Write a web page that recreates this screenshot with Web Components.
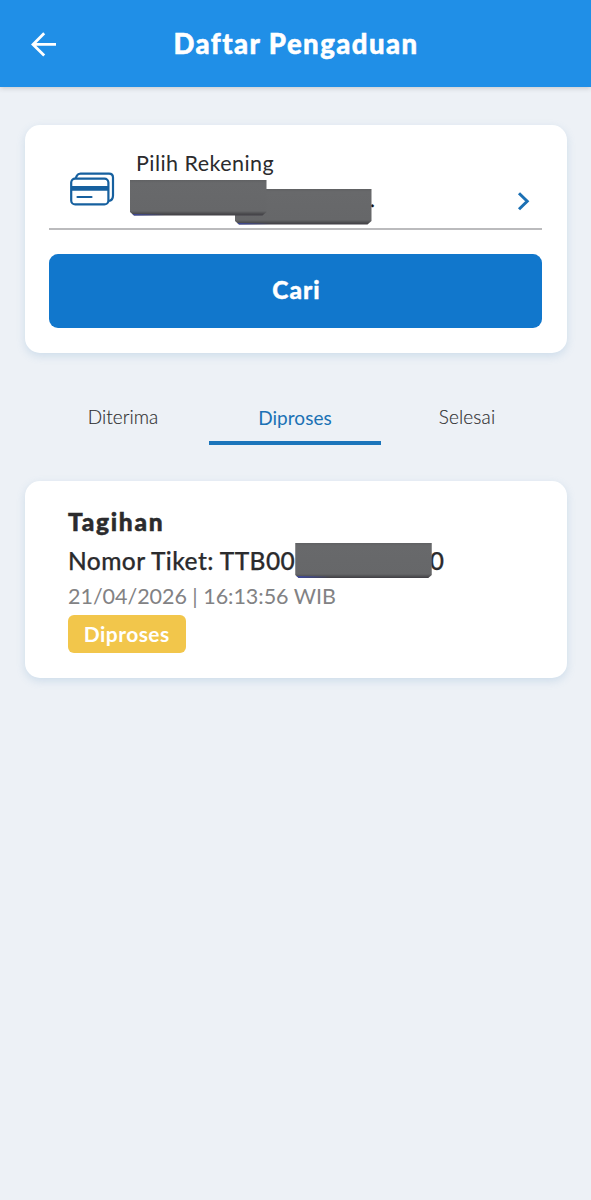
<!DOCTYPE html>
<html lang="id">
<head>
<meta charset="utf-8">
<meta name="viewport" content="width=device-width, initial-scale=1">
<title>Daftar Pengaduan</title>
<style>
  html, body { margin: 0; min-height: 100%; }
  body {
    background: #edf1f6;
    color: #2b2b2d;
    font-family: Lato, "Liberation Sans", sans-serif;
    font-kerning: normal;
  }
</style>
</head>
<body>
<pengaduan-page>
  <app-header slot="header">Daftar Pengaduan</app-header>

  <app-card class="search">
    <account-picker>
      <span slot="label">Pilih Rekening</span>
      <masked-bar slot="value"></masked-bar>
      <masked-bar slot="value" class="second"></masked-bar>
      <span slot="tail">.</span>
    </account-picker>
    <app-button>Cari</app-button>
  </app-card>

  <tab-bar>
    <tab-item style="--track: 0.05px">Diterima</tab-item>
    <tab-item style="--track: 0.05px" active>Diproses</tab-item>
    <tab-item style="--track: 0.15px">Selesai</tab-item>
  </tab-bar>

  <app-card class="ticket">
    <ticket-item>
      <span slot="title">Tagihan</span>
      <span slot="number">Nomor Tiket: TTB00</span>
      <masked-bar slot="number"></masked-bar>
      <span slot="number" class="last">0</span>
      <span slot="date">21/04/2026 | 16:13:56 WIB</span>
      <status-badge slot="status">Diproses</status-badge>
    </ticket-item>
  </app-card>
</pengaduan-page>

<script>
"use strict";

(function () {
  /* registers an element whose shadow root is cloned from the markup */
  function define(name, markup) {
    var template = document.createElement("template");
    template.innerHTML = markup;
    customElements.define(name, class extends HTMLElement {
      constructor() {
        super();
        this.attachShadow({ mode: "open" }).appendChild(template.content.cloneNode(true));
      }
    });
  }

  /* ── Page ──────────────────────────────────────────────────── */
  define("pengaduan-page", `
    <style>
      :host { display: flex; flex-direction: column; min-height: 1200px; }
      main { display: flex; flex-direction: column; padding: 37.5px 24.5px 0; }
      ::slotted(tab-bar) { margin: 37px 13.5px 36.4px 12.5px; }
    </style>
    <slot name="header"></slot>
    <main><slot></slot></main>
  `);

  /* ── Header ────────────────────────────────────────────────── */
  define("app-header", `
    <style>
      :host {
        display: grid;
        grid-template-columns: 86px 1fr 86px;
        align-items: center;
        height: 87px;
        background: #208fe7;
        color: #fff;
        box-shadow: 0 1px 5px rgba(70, 60, 60, 0.24);
      }
      svg { display: block; margin-left: 30px; }
      h1 {
        margin: 0;
        text-align: center;
        font-size: 27.5px;
        line-height: 34px;
        font-weight: 900;
        letter-spacing: 1.45px;
        text-indent: 1px;
        -webkit-text-stroke: 0.5px currentColor;
        white-space: nowrap;
      }
    </style>
    <svg width="27" height="26" viewBox="0 0 27 26" fill="none" stroke="#fff" stroke-width="2.8">
      <path d="M26 13.4H3M14.2 2.2 3 13.4l11.2 11.2"/>
    </svg>
    <h1><slot></slot></h1>
  `);

  /* ── Card ──────────────────────────────────────────────────── */
  define("app-card", `
    <style>
      :host {
        display: block;
        box-sizing: border-box;
        background: #fff;
        border-radius: 15px;
        box-shadow: 0 3px 9px rgba(95, 150, 195, 0.22);
      }
      :host(.search) { height: 228px; padding: 0 24.5px; }
      :host(.ticket) { height: 197px; padding: 0 43.5px; }
    </style>
    <slot></slot>
  `);

  /* ── Redaction bar ─────────────────────────────────────────── */
  define("masked-bar", `
    <style>
      :host {
        display: block;
        flex: none;
        width: 136.5px;
        height: 35.5px;
        background: linear-gradient(#606163 0, #68696b 3px, #666769 31px, #48484b 34px, #403d45 100%);
        clip-path: polygon(0 0, 100% 0, 100% 32px, calc(100% - 4px) 100%, 4px 100%, 0 32px);
      }
      :host(.second) { margin: 9px 0 0 -31.5px; }
      i {
        display: block;
        height: 100%;
        background: linear-gradient(90deg, #3c48a0, transparent 35px) bottom / 100% 2px no-repeat;
      }
    </style>
    <i></i>
  `);

  /* ── Account picker ────────────────────────────────────────── */
  define("account-picker", `
    <style>
      :host {
        display: flex;
        box-sizing: border-box;
        height: 105px;
        border-bottom: 2px solid #bbbbbd;
      }
      .cards { margin: 47px 0 0 21px; flex: none; }
      .text { flex: 1; margin-left: 15px; padding-top: 25px; }
      .label {
        margin-left: 6px;
        font-size: 21.5px;
        line-height: 26px;
        letter-spacing: 0.45px;
      }
      .value { display: flex; margin-top: 4.5px; height: 45px; align-items: flex-start; }
      /* the first bar sits above the second one */
      ::slotted(masked-bar:not(.second)) { position: relative; z-index: 1; }
      .tail { font-size: 20px; line-height: 24px; margin: 7px 0 0 -1.5px; color: #111; -webkit-text-stroke: 0.5px currentColor; }
      .chevron { flex: none; margin: 67px 12px 0 0; }
    </style>
    <svg class="cards" width="45" height="35" viewBox="0 0 45 35" fill="none" stroke="#16609f" stroke-width="2.2">
      <path d="M5.5 6.5 7 3.6Q8 1.6 10.5 1.6H39Q43 1.6 43 5.6V23.5Q43 28.5 38.5 29"/>
      <rect x="1.2" y="6.6" width="37.2" height="25.8" rx="4"/>
      <path d="M1.2 16.3H38.4" stroke-width="4.8"/>
      <path d="M7.5 25H21.5" stroke-linecap="round"/>
    </svg>
    <div class="text">
      <div class="label"><slot name="label"></slot></div>
      <div class="value"><slot name="value"></slot><span class="tail"><slot name="tail"></slot></span></div>
    </div>
    <svg class="chevron" width="13" height="20" viewBox="0 0 13 20" fill="none" stroke="#1b70b4" stroke-width="3">
      <path d="m2 1.2 8.2 8L2 17.2"/>
    </svg>
  `);

  /* ── Button ────────────────────────────────────────────────── */
  define("app-button", `
    <style>
      :host { display: block; margin-top: 24.5px; }
      button {
        display: block;
        width: 100%;
        height: 74px;
        border: 0;
        padding: 0 0 3px;
        border-radius: 9px;
        background: #1177cc;
        color: #fff;
        font: 900 24.5px/30px Lato, sans-serif;
        letter-spacing: 1.1px;
        text-indent: 2px;
        -webkit-text-stroke: 0.4px currentColor;
      }
    </style>
    <button type="button"><slot></slot></button>
  `);

  /* ── Tabs ──────────────────────────────────────────────────── */
  define("tab-bar", `
    <style>
      :host { display: grid; grid-template-columns: repeat(3, 1fr); height: 55px; }
    </style>
    <slot></slot>
  `);

  define("tab-item", `
    <style>
      :host {
        display: block;
        box-sizing: border-box;
        padding-top: 15px;
        text-align: center;
        font-size: 19px;
        line-height: 24px;
        font-weight: 300;
        color: #303032;
        letter-spacing: var(--track, 0);
        -webkit-text-stroke: 0.15px currentColor;
      }
      :host([active]) {
        padding-top: 16px;
        font-weight: 400;
        color: #1b72b5;
        border-bottom: 4px solid #1b75bb;
        -webkit-text-stroke: 0;
      }
    </style>
    <slot></slot>
  `);

  /* ── Ticket ────────────────────────────────────────────────── */
  define("ticket-item", `
    <style>
      :host { display: flex; flex-direction: column; align-items: flex-start; padding-top: 26px; white-space: nowrap; }
      .title {
        font-size: 24.5px;
        line-height: 30px;
        font-weight: 900;
        letter-spacing: 1.7px;
        -webkit-text-stroke: 0.5px currentColor;
      }
      .number {
        display: flex;
        align-items: flex-start;
        height: 36px;
        margin-top: 6px;
        font-size: 24.5px;
        line-height: 36px;
        font-weight: 500;
        letter-spacing: 0.43px;
        -webkit-text-stroke: 0.25px currentColor;
      }
      ::slotted(.last) { margin-left: -2px; }
      .date { margin-top: 4px; font-size: 21.5px; line-height: 26px; color: #828284; letter-spacing: -0.03px; }
      .status { margin-top: 6px; }
    </style>
    <div class="title"><slot name="title"></slot></div>
    <div class="number"><slot name="number"></slot></div>
    <div class="date"><slot name="date"></slot></div>
    <div class="status"><slot name="status"></slot></div>
  `);

  define("status-badge", `
    <style>
      :host {
        display: block;
        box-sizing: border-box;
        width: 117.5px;
        height: 38.5px;
        border-radius: 6px;
        background: #f2c64b;
        color: #fff;
        text-align: center;
        font-size: 21px;
        line-height: 38px;
        font-weight: 700;
        letter-spacing: 0.45px;
      }
    </style>
    <slot></slot>
  `);
})();
</script>
</body>
</html>
